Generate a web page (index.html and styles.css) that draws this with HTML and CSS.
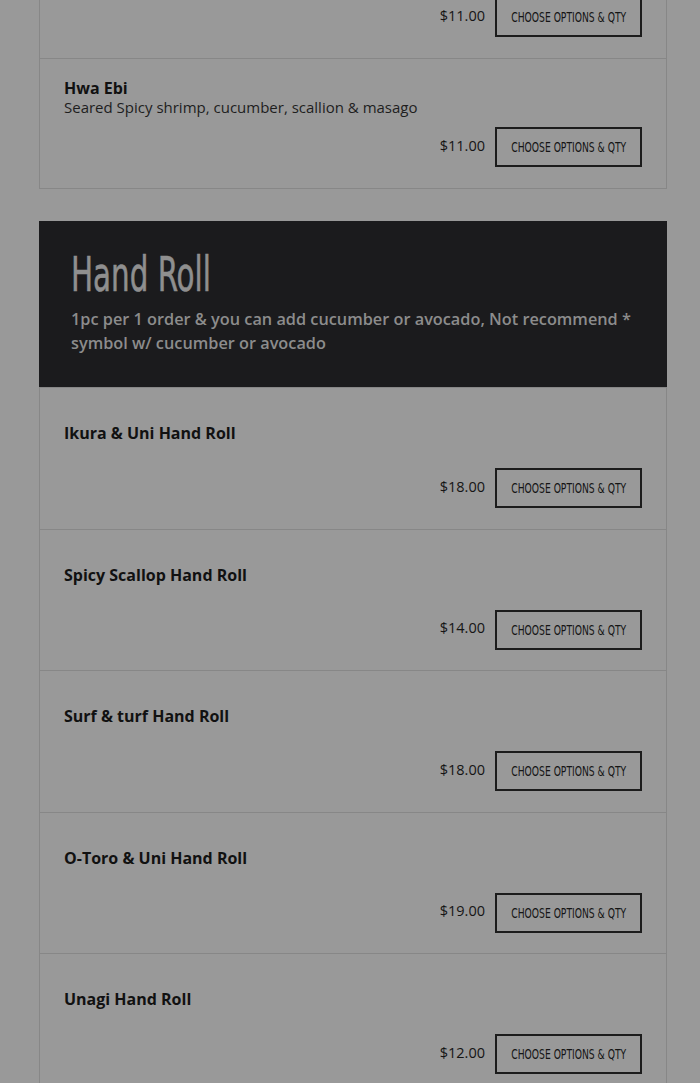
FILE: index.html
```html
<!DOCTYPE html>
<html>
<head>
<meta charset="utf-8">
<link rel="stylesheet" href="styles.css">
</head>
<body>
<div class="page">
  <div class="list list-top">
    <div class="item item-cut">
      <div class="buy-row">
        <span class="price">$11.00</span>
        <a class="btn"><span>Choose options &amp; qty</span></a>
      </div>
    </div>
    <div class="item">
      <div class="name">Hwa Ebi</div>
      <div class="desc">Seared Spicy shrimp, cucumber, scallion &amp; masago</div>
      <div class="buy-row">
        <span class="price">$11.00</span>
        <a class="btn"><span>Choose options &amp; qty</span></a>
      </div>
    </div>
  </div>

  <section class="section">
    <div class="section-head">
      <h2 class="section-title"><span>Hand Roll</span></h2>
      <p class="section-sub">1pc per 1 order &amp; you can add cucumber or avocado, Not recommend * symbol w/ cucumber or avocado</p>
    </div>
    <div class="list">
      <div class="item no-desc">
        <div class="name">Ikura &amp; Uni Hand Roll</div>
        <div class="buy-row">
          <span class="price">$18.00</span>
          <a class="btn"><span>Choose options &amp; qty</span></a>
        </div>
      </div>
      <div class="item no-desc">
        <div class="name">Spicy Scallop Hand Roll</div>
        <div class="buy-row">
          <span class="price">$14.00</span>
          <a class="btn"><span>Choose options &amp; qty</span></a>
        </div>
      </div>
      <div class="item no-desc">
        <div class="name">Surf &amp; turf Hand Roll</div>
        <div class="buy-row">
          <span class="price">$18.00</span>
          <a class="btn"><span>Choose options &amp; qty</span></a>
        </div>
      </div>
      <div class="item no-desc">
        <div class="name">O-Toro &amp; Uni Hand Roll</div>
        <div class="buy-row">
          <span class="price">$19.00</span>
          <a class="btn"><span>Choose options &amp; qty</span></a>
        </div>
      </div>
      <div class="item no-desc">
        <div class="name">Unagi Hand Roll</div>
        <div class="buy-row">
          <span class="price">$12.00</span>
          <a class="btn"><span>Choose options &amp; qty</span></a>
        </div>
      </div>
    </div>
  </section>
</div>
</body>
</html>
```

FILE: styles.css
```css
* { box-sizing: border-box; }
html, body {
  margin: 0;
  padding: 0;
  background: #999999;
}
body {
  font-family: "Open Sans", "Liberation Sans", sans-serif;
  color: #111;
  overflow: hidden;
}
.page {
  width: 628px;
  margin: 0 auto 0 39px;
}
.list {
  border-left: 1px solid #878787;
  border-right: 1px solid #878787;
}
.list-top {
  margin-top: -3px;
  border-bottom: 1px solid #878787;
}
.item {
  padding: 19px 24px 21px 24px;
  border-top: 1px solid #878787;
}
.item-cut {
  border-top: none;
  padding-top: 0;
}
.name {
  font-weight: 700;
  font-size: 16px;
  line-height: 20px;
  color: #111;
}
.desc {
  font-size: 15px;
  line-height: 19px;
  color: #1e1e1e;
  margin-bottom: 10px;
}
.no-desc {
  padding-top: 35px;
  padding-bottom: 20.5px;
}
.no-desc .name {
  margin-bottom: 25px;
}
.buy-row {
  display: flex;
  justify-content: flex-end;
  align-items: center;
  gap: 10px;
}
.price {
  font-size: 14.5px;
  color: #151515;
  position: relative;
  top: -2px;
}
.btn {
  display: flex;
  align-items: center;
  justify-content: center;
  width: 147px;
  height: 40px;
  border: 2px solid #1c1c1c;
  color: #151515;
  text-transform: uppercase;
  font-family: "DejaVu Sans Condensed", "Liberation Sans", sans-serif;
  font-size: 14px;
  white-space: nowrap;
}
.btn span {
  display: inline-block;
  transform: scaleX(0.73);
}
.section {
  margin-top: 32px;
}
.section-head {
  background: #1b1b1d;
  padding: 24px 32px 32px 32px;
}
.section-title {
  margin: 0;
  font-family: "DejaVu Sans Condensed", "Liberation Sans", sans-serif;
  font-weight: 400;
  font-size: 48px;
  line-height: 58px;
  color: #8f8f8f;
  -webkit-text-stroke: 0.6px #8f8f8f;
}
.section-title span {
  display: inline-block;
  transform: scaleX(0.68);
  transform-origin: left center;
}
.section-sub {
  margin: 4px 0 0 0;
  font-size: 16.3px;
  font-weight: 600;
  line-height: 24px;
  color: #8c8c8c;
}
```
